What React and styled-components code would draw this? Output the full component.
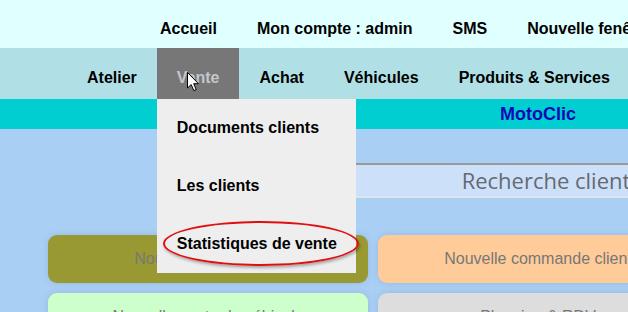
import React from "react"
import styled, { createGlobalStyle } from "styled-components"

const GlobalStyle = createGlobalStyle`
  html, body {
    margin: 0;
    padding: 0;
    overflow: hidden;
    background: #a9cff4;
  }
  body {
    font-family: "Liberation Sans", Arial, sans-serif;
  }
`

const Page = styled.div`
  width: 1076px;
  min-height: 312px;
  background: #a9cff4;
`

const TopBar = styled.nav`
  display: flex;
  height: 48px;
  padding-left: 140px;
  background: #e0ffff;
`

const MainBar = styled.nav`
  display: flex;
  height: 51px;
  padding-left: 67px;
  background: #b0e0e6;
`

const MenuItem = styled.div`
  position: relative;
  box-sizing: border-box;
  height: 100%;
  padding: ${p => (p.$top ? "20px" : "21px")} 20px 0;
  font-size: 16px;
  font-weight: bold;
  line-height: 18px;
  white-space: nowrap;
  color: ${p => (p.$active ? "#c3c7cb" : "#000")};
  background: ${p => (p.$active ? "#777777" : "transparent")};
`

const Dropdown = styled.ul`
  position: absolute;
  top: 100%;
  left: 0;
  z-index: 5;
  width: 199px;
  margin: 0;
  padding: 0;
  list-style: none;
  background: #eeeeee;
`

const DropItem = styled.li`
  position: relative;
  padding: 20px;
  font-size: 16px;
  font-weight: bold;
  line-height: 18px;
  color: #000;
`

const Circle = styled.span`
  position: absolute;
  left: 6px;
  top: 6px;
  width: 192px;
  height: 41px;
  border: 2px solid #e01010;
  border-radius: 50%;
  box-shadow: 1px 2px 3px rgba(0, 0, 0, 0.3);
  pointer-events: none;
`

const Cursor = styled.svg`
  position: absolute;
  left: 30px;
  top: 24px;
  z-index: 6;
`

const Banner = styled.div`
  height: 30px;
  background: #00ced1;
  text-align: center;
  font-size: 18px;
  font-weight: bold;
  line-height: 30px;
  color: #0a0ab4;
`

const Content = styled.main`
  padding-top: 34px;
`

const SearchBar = styled.div`
  width: 660px;
  margin-left: 216px;
  border-top: 2px solid #9a9a9a;
  border-bottom: 2px solid #dde4ea;
  background: #cde0fa;
  text-align: center;
  font-family: "Open Sans", "DejaVu Sans", sans-serif;
  font-size: 22px;
  line-height: 31px;
  color: #666a70;
`

const Cards = styled.div`
  display: grid;
  grid-template-columns: repeat(3, 320px);
  gap: 10px;
  margin: 37px 48px 0;
`

const Card = styled.div`
  height: 48px;
  border-radius: 9px;
  background: ${p => p.$bg};
  box-shadow: 0 0 6px rgba(60, 100, 150, 0.18);
  text-align: center;
  font-size: 16px;
  line-height: 48px;
  color: #777;
`

const top = ["Accueil", "Mon compte : admin", "SMS", "Nouvelle fenêtre", "Déconnexion"]

const cards = [
  ["#999933", "Nouveau devis client"],
  ["#ffcc99", "Nouvelle commande client"],
  ["#ccccff", "Nouvelle facture client"],
  ["#ccffcc", "Nouvelle vente de véhicule"],
  ["#dddddd", "Planning & RDV"],
  ["#ffffcc", "Nouvel ordre de réparation"],
]

export default function App() {
  return (
    <Page>
      <GlobalStyle />
      <TopBar>
        {top.map(t => (
          <MenuItem key={t} $top>
            {t}
          </MenuItem>
        ))}
      </TopBar>
      <MainBar>
        <MenuItem>Atelier</MenuItem>
        <MenuItem $active>
          Vente
          <Cursor width="13" height="20" viewBox="0 0 13 20">
            <path
              d="M0.5 0.5 L0.5 16 L4.2 12.6 L6.8 18.6 L9.2 17.6 L6.7 11.7 L11.5 11.7 Z"
              fill="#fff"
              stroke="#000"
              strokeWidth="1"
              strokeLinejoin="round"
            />
          </Cursor>
          <Dropdown>
            <DropItem>Documents clients</DropItem>
            <DropItem>Les clients</DropItem>
            <DropItem>
              Statistiques de vente
              <Circle />
            </DropItem>
          </Dropdown>
        </MenuItem>
        <MenuItem>Achat</MenuItem>
        <MenuItem>Véhicules</MenuItem>
        <MenuItem>Produits &amp; Services</MenuItem>
      </MainBar>
      <Banner>MotoClic</Banner>
      <Content>
        <SearchBar>Recherche client</SearchBar>
        <Cards>
          {cards.map(([bg, label]) => (
            <Card key={label} $bg={bg}>
              {label}
            </Card>
          ))}
        </Cards>
      </Content>
    </Page>
  )
}
